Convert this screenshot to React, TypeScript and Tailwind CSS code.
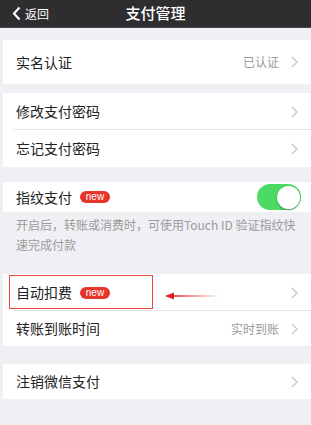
import React from "react";

const font = { fontFamily: '"Noto Sans CJK SC", "Noto Sans", sans-serif' };

function Chevron() {
  return (
    <svg width="7" height="12" viewBox="0 0 7 12" className="shrink-0">
      <path d="M1 1 L6 6 L1 11" fill="none" stroke="#c7c7cc" strokeWidth="1.4" />
    </svg>
  );
}

function Badge() {
  return (
    <span className="ml-[8px] inline-flex h-[12px] w-[30px] items-center justify-center rounded-full bg-[#e8352b] text-[10px] leading-none text-white" style={{ fontFamily: '"Liberation Sans", sans-serif' }}>
      new
    </span>
  );
}

function Row({ label, right, badge, h, divider }: { label: string; right?: string; badge?: boolean; h: string; divider?: boolean }) {
  return (
    <div className={`relative flex items-center bg-white pl-[13px] pr-[13px] ${h}`}>
      <span className="text-[14px] text-[#222]">{label}</span>
      {badge && <Badge />}
      <div className="flex-1" />
      {right && <span className="mr-[12px] text-[12px] text-[#9a9a9a]">{right}</span>}
      <Chevron />
      {divider && <div className="absolute bottom-0 left-[10px] right-0 h-px bg-[#e5e5e5]" />}
    </div>
  );
}

export default function App() {
  return (
    <div className="relative h-[425px] w-[311px] overflow-hidden bg-[#efeff4]" style={font}>
      <div className="grid h-[28px] grid-cols-[1fr_auto_1fr] items-center border-b border-[#4a4a4c] bg-[#2e2e30]">
        <div className="flex items-center pl-[12px]">
          <svg width="9" height="15" viewBox="0 0 9 15">
            <path d="M7.5 1.5 L2 7.5 L7.5 13.5" fill="none" stroke="#fff" strokeWidth="2.2" />
          </svg>
          <span className="ml-[4px] text-[12px] text-white">返回</span>
        </div>
        <span className="text-[15px] font-medium text-white">支付管理</span>
        <div />
      </div>
      <div className="ml-[3px]">
        <div className="h-[12px]" />
        <Row label="实名认证" right="已认证" h="h-[44px]" />
        <div className="h-[9px]" />
        <Row label="修改支付密码" h="h-[37px]" divider />
        <Row label="忘记支付密码" h="h-[37px]" />
        <div className="h-[15px]" />
        <div className="flex h-[30px] items-center bg-white pl-[13px] pr-[10px]">
          <span className="text-[14px] text-[#222]">指纹支付</span>
          <Badge />
          <div className="flex-1" />
          <div className="flex h-[26px] w-[44px] items-center justify-end rounded-full bg-[#4cd964] p-[1.5px]">
            <div className="h-[23px] w-[23px] rounded-full bg-white shadow-[0_1px_2px_rgba(0,0,0,0.3)]" />
          </div>
        </div>
        <div className="h-[62px] pl-[13px] pr-[12px] pt-[3px] text-[12px] leading-[20px] text-[#9b9b9b]">
          开启后，转账或消费时，可使用Touch ID 验证指纹快速完成付款
        </div>
        <Row label="自动扣费" badge h="h-[37px]" divider />
        <Row label="转账到账时间" right="实时到账" h="h-[35px]" />
        <div className="h-[18px]" />
        <Row label="注销微信支付" h="h-[35px]" />
      </div>
      <div className="absolute left-[9px] top-[275px] h-[34px] w-[144px] border-[1.5px] border-[#e8463e]" />
      <svg className="absolute left-[163px] top-[291px]" width="60" height="10" viewBox="0 0 60 10">
        <path d="M58 5 L10 4.2 L10 5.8 Z" fill="#e02020" />
        <path d="M2 5 L11 1.5 L11 8.5 Z" fill="#e02020" />
      </svg>
    </div>
  );
}
